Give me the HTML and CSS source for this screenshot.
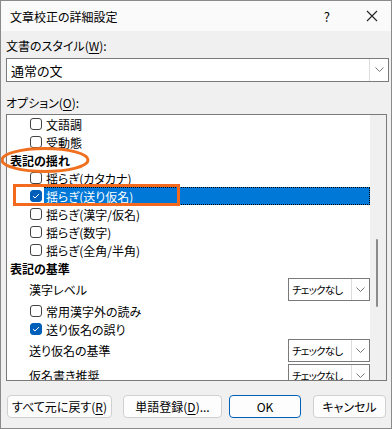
FILE: index.html
```html
<!DOCTYPE html>
<html lang="ja">
<head>
    <meta charset="UTF-8">
    <title>文章校正の詳細設定</title>
    <link rel="stylesheet" href="styles.css">
</head>
<body>

<div class="window">
    <div class="titlebar">
        <span class="title">文章校正の詳細設定</span>
        <span class="help">?</span>
        <svg class="close" width="12" height="12" viewBox="0 0 12 12">
            <path d="M1 1 L11 11 M11 1 L1 11" stroke="#222" stroke-width="1.1" fill="none"/>
        </svg>
    </div>

    <div class="content">
        <div class="label">文書のスタイル(<u>W</u>):</div>
        <div class="combo">
            <span class="combo-text">通常の文</span>
            <span class="combo-arrow">
                <svg width="9" height="6" viewBox="0 0 9 6"><path d="M0.5 0.5 L4.5 4.5 L8.5 0.5" stroke="#777" fill="none"/></svg>
            </span>
        </div>

        <div class="label label-options">オプション(<u>O</u>):</div>
        <div class="listbox">
            <div class="items">
                <div class="row check"><span class="cb"></span>文語調</div>
                <div class="row check"><span class="cb"></span>受動態</div>
                <div class="row heading">表記の揺れ</div>
                <div class="row check"><span class="cb"></span>揺らぎ(カタカナ)</div>
                <div class="row check"><span class="cb checked"></span><span class="selected">揺らぎ(送り仮名)</span></div>
                <div class="row check"><span class="cb"></span>揺らぎ(漢字/仮名)</div>
                <div class="row check"><span class="cb"></span>揺らぎ(数字)</div>
                <div class="row check"><span class="cb"></span>揺らぎ(全角/半角)</div>
                <div class="row heading">表記の基準</div>
                <div class="row combo-row">
                    <span>漢字レベル</span>
                    <span class="mini-combo"><span class="mini-text">チェックなし</span><span class="mini-arrow"><svg width="9" height="6" viewBox="0 0 9 6"><path d="M0.5 0.5 L4.5 4.5 L8.5 0.5" stroke="#777" fill="none"/></svg></span></span>
                </div>
                <div class="row check"><span class="cb"></span>常用漢字外の読み</div>
                <div class="row check"><span class="cb checked"></span>送り仮名の誤り</div>
                <div class="row combo-row">
                    <span>送り仮名の基準</span>
                    <span class="mini-combo"><span class="mini-text">チェックなし</span><span class="mini-arrow"><svg width="9" height="6" viewBox="0 0 9 6"><path d="M0.5 0.5 L4.5 4.5 L8.5 0.5" stroke="#777" fill="none"/></svg></span></span>
                </div>
                <div class="row combo-row">
                    <span>仮名書き推奨</span>
                    <span class="mini-combo"><span class="mini-text">チェックなし</span><span class="mini-arrow"><svg width="9" height="6" viewBox="0 0 9 6"><path d="M0.5 0.5 L4.5 4.5 L8.5 0.5" stroke="#777" fill="none"/></svg></span></span>
                </div>
            </div>
            <div class="scrollbar"><div class="thumb"></div></div>
        </div>

        <div class="buttons">
            <button class="btn btn-reset">すべて元に戻す(<u>R</u>)</button>
            <button class="btn btn-dict">単語登録(<u>D</u>)...</button>
            <button class="btn btn-ok">OK</button>
            <button class="btn btn-cancel">キャンセル</button>
        </div>
    </div>

    <!-- annotation marks -->
    <svg class="mark-ellipse" width="92" height="28" viewBox="0 0 92 28">
        <ellipse cx="45" cy="14" rx="43" ry="11.5" stroke="#f07020" stroke-width="3" fill="none"/>
    </svg>
    <div class="mark-box"></div>
</div>

</body>
</html>
```

FILE: styles.css
```css
body {
    margin: 0;
    font-family: "Noto Sans CJK JP", "Noto Sans", sans-serif;
    font-size: 12px;
    font-feature-settings: "palt";
    color: #000;
    background: #fff;
}

.window {
    position: relative;
    width: 392px;
    height: 429px;
    box-sizing: border-box;
    border: 1px solid #8a8a8a;
    background-color: #f0f0f0;
    overflow: hidden;
}

.titlebar {
    height: 30px;
    background: #fafafa;
    display: flex;
    align-items: center;
    padding-left: 9px;
}

.title {
    flex: 1;
    font-size: 12px;
}

.help {
    font-size: 13px;
    margin-right: 36px;
}

.close {
    margin-right: 13px;
}

.content {
    padding: 0 2px 0 5px;
}

.label {
    height: 16px;
    line-height: 16px;
    margin-top: 7px;
}

.label-options {
    margin-top: 13px;
}

u {
    text-decoration-thickness: 1px;
    text-underline-offset: 2px;
}

.combo {
    margin-top: 4px;
    height: 24px;
    box-sizing: border-box;
    border: 1px solid #7a7a7a;
    background: #fff;
    display: flex;
    align-items: center;
}

.combo-text {
    flex: 1;
    padding-left: 4px;
    font-size: 13px;
}

.combo-arrow {
    width: 18px;
    height: 22px;
    border-left: 1px solid #dcdcdc;
    display: flex;
    align-items: center;
    justify-content: center;
}

.listbox {
    margin-top: 3px;
    margin-right: 2px;
    height: 267px;
    box-sizing: border-box;
    border: 1px solid #7a7a7a;
    background: #fff;
    display: flex;
    overflow: hidden;
}

.items {
    flex: 1;
    overflow: hidden;
}

.row {
    height: 18px;
    display: flex;
    align-items: center;
    white-space: nowrap;
}

.check {
    padding-left: 23px;
}

.heading {
    padding-left: 3px;
    font-weight: bold;
}

.combo-row {
    height: 25px;
    padding-left: 22px;
    justify-content: space-between;
}

.cb {
    width: 12px;
    height: 12px;
    box-sizing: border-box;
    border: 1px solid #444;
    border-radius: 3px;
    background: #fff;
    margin-right: 4px;
    flex-shrink: 0;
}

.cb.checked {
    border-color: #005fb8;
    background: #005fb8 url("data:image/svg+xml;utf8,<svg xmlns='http://www.w3.org/2000/svg' width='10' height='10' viewBox='0 0 10 10'><path d='M2 5.2 L4 7 L8 3' stroke='white' stroke-width='1' fill='none'/></svg>") center no-repeat;
}

.selected {
    flex: 1;
    align-self: stretch;
    display: flex;
    align-items: center;
    margin-left: -2px;
    padding-left: 2px;
    background: #0078d7;
    color: #fff;
    border: 1px dotted #000;
    border-left: none;
}

.mini-combo {
    width: 82px;
    height: 23px;
    box-sizing: border-box;
    border: 1px solid #7a7a7a;
    display: flex;
    align-items: center;
}

.mini-text {
    flex: 1;
    padding-left: 3px;
    font-size: 10.5px;
    letter-spacing: -0.8px;
}

.mini-arrow {
    width: 17px;
    height: 21px;
    border-left: 1px solid #dcdcdc;
    display: flex;
    align-items: center;
    justify-content: center;
    flex-shrink: 0;
}

.scrollbar {
    width: 16px;
    background: #f0f0f0;
    position: relative;
}

.thumb {
    position: absolute;
    left: 6px;
    top: 124px;
    width: 2px;
    height: 68px;
    background: #8b8b8b;
    border-radius: 1px;
}

.buttons {
    margin-top: 14px;
    display: flex;
    padding-left: 1px;
}

.btn {
    height: 23px;
    padding: 0;
    font-family: inherit;
    font-size: 12px;
    font-feature-settings: "palt";
    color: #000;
    background: #fdfdfd;
    border: 1px solid #d0d0d0;
    border-radius: 4px;
}

.btn-reset {
    width: 105px;
}

.btn-dict {
    width: 99px;
    margin-left: 11px;
}

.btn-ok {
    width: 72px;
    margin-left: 7px;
    border-color: #005fb8;
}

.btn-cancel {
    width: 73px;
    margin-left: 12px;
}

.mark-ellipse {
    position: absolute;
    left: -1px;
    top: 145px;
}

.mark-box {
    position: absolute;
    left: 12px;
    top: 183px;
    width: 167px;
    height: 22px;
    box-sizing: border-box;
    border: 3px solid #f36a1e;
}
```
